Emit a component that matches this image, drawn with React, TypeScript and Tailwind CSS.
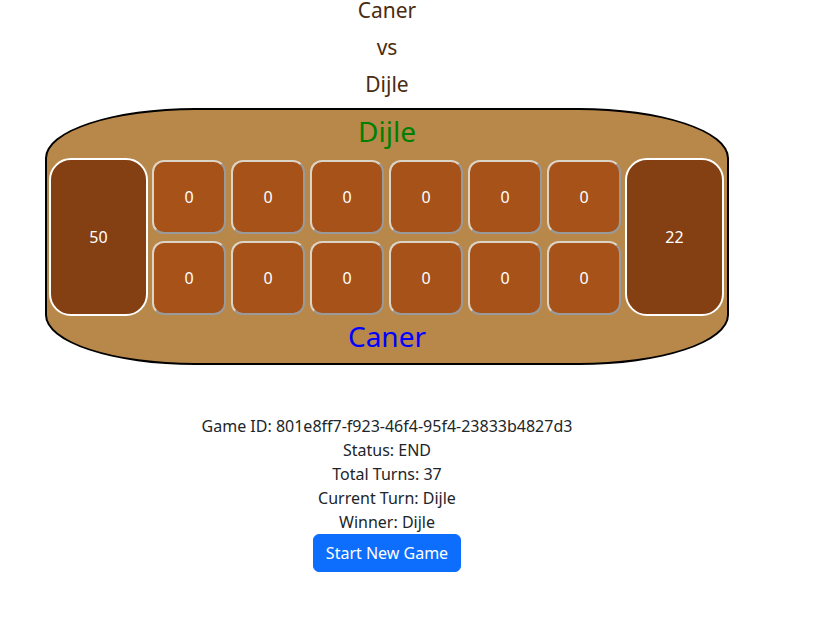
import React from "react";

const font = { fontFamily: '"Noto Sans", "Open Sans", sans-serif' };

function Pit({ v }: { v: number }) {
  return (
    <div className="shrink-0 w-[74px] h-[74px] rounded-[12px] bg-[#a65219] border-2 border-t-[#ddd4c8] border-l-[#ddd4c8] border-r-[#9a9a9a] border-b-[#9a9a9a] flex items-center justify-center text-white text-[16px]">
      {v}
    </div>
  );
}

function Store({ v }: { v: number }) {
  return (
    <div className="shrink-0 w-[99px] h-[158px] rounded-[22px] bg-[#843f12] border-2 border-white flex items-center justify-center text-white text-[16px]">
      {v}
    </div>
  );
}

export default function App() {
  const top = [0, 0, 0, 0, 0, 0];
  const bottom = [0, 0, 0, 0, 0, 0];
  return (
    <div className="w-[774px] text-center bg-white min-h-[629px]" style={font}>
      <div className="flex flex-col gap-[17px] text-[21px] leading-[20px] text-[#4a2c10]">
        <div>Caner</div>
        <div>vs</div>
        <div>Dijle</div>
      </div>
      <div className="mt-[14px] ml-[45px] w-[684px] h-[257px] border-2 border-black rounded-[150px/50px] bg-[#b8874a] pt-[6px] pl-[2px] pr-[2px] flex flex-col">
        <div className="text-[28px] leading-[30px] text-[#008000]">Dijle</div>
        <div className="mt-[12px] flex items-center gap-[4px]">
          <Store v={50} />
          <div className="flex flex-col gap-[7px]">
            <div className="flex gap-[5px]">
              {top.map((v, i) => (
                <Pit key={i} v={v} />
              ))}
            </div>
            <div className="flex gap-[5px]">
              {bottom.map((v, i) => (
                <Pit key={i} v={v} />
              ))}
            </div>
          </div>
          <Store v={22} />
        </div>
        <div className="mt-[5px] text-[28px] leading-[30px] text-[#0000ff]">Caner</div>
      </div>
      <div className="mt-[49px] text-[16px] leading-[24px] text-[#212529]">
        <div>Game ID: 801e8ff7-f923-46f4-95f4-23833b4827d3</div>
        <div>Status: END</div>
        <div>Total Turns: 37</div>
        <div>Current Turn: Dijle</div>
        <div>Winner: Dijle</div>
        <button className="bg-[#0d6efd] text-white text-[16px] leading-[24px] px-[12px] py-[6px] rounded-[6px] border border-[#0d6efd]">
          Start New Game
        </button>
      </div>
    </div>
  );
}
